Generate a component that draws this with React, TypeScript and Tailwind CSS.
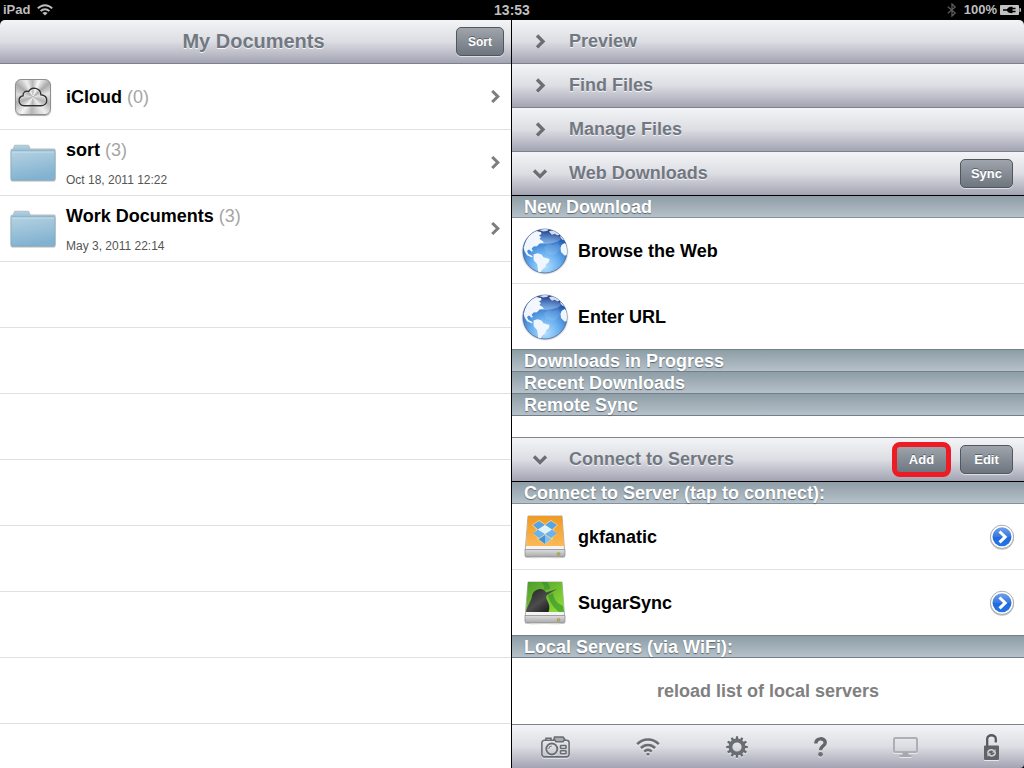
import type { ReactNode } from 'react';

const barGradient = 'bg-linear-to-b from-[#f3f4f7] via-[#dddee3] to-[#a2a4b3]';
const barText = 'text-[#717881] [text-shadow:0_1px_0_#f4f4f8]';

interface FolderItem {
  name: string;
  count: number;
  date?: string;
  icon: ReactNode;
}

function WifiIcon({ className, fill }: { className: string; fill: string }) {
  return (
    <svg className={className} viewBox="0 0 24 18" fill="none" stroke={fill} strokeWidth="2.6">
      <path d="M1.2 6.2C7.4 0 16.6 0 22.8 6.2" />
      <path d="M4.9 10c4-4 10.2-4 14.2 0" />
      <path d="M8.3 13.6c2.2-2 5.2-2 7.4 0" />
      <path d="M12 18l-2-2.1c1.2-1.1 2.8-1.1 4 0z" fill={fill} stroke="none" />
    </svg>
  );
}

function StatusWifi() {
  return (
    <svg className="h-3 w-4" viewBox="0 0 16 12" fill="none" stroke="#bdbdbd" strokeWidth="1.9">
      <path d="M.8 4.4C5 .1 11 .1 15.2 4.4" />
      <path d="M3.6 7.1c2.5-2.4 6.3-2.4 8.800 0" />
      <path d="M8 11.5L5.4 8.9c1.5-1.3 3.7-1.3 5.2 0z" fill="#bdbdbd" stroke="none" />
    </svg>
  );
}

function BluetoothIcon() {
  return (
    <svg className="h-[14px] w-[10px]" viewBox="0 0 10 14" fill="none" stroke="#5b5b5b" strokeWidth="1.3">
      <path d="M.8 3.8l7.4 6.2L5 13V1l3.2 3L.8 10.2" />
    </svg>
  );
}

function BatteryIcon() {
  return (
    <svg className="h-[10px] w-[21px]" viewBox="0 0 21 10">
      <path d="M1 0h17a1 1 0 011 1v8a1 1 0 01-1 1H1a1 1 0 01-1-1V1a1 1 0 011-1z" fill="#c2c2c2" />
      <path d="M19.5 3h.5a1 1 0 011 1v2a1 1 0 01-1 1h-.5z" fill="#c2c2c2" />
      <path d="M3 4.200h4C8 2.300 9.500 1.800 12.500 1.800v1h3v1.400h-3v1.600h3v1.400h-3v1c-3 0-4.500-.5-5.500-2.400H3z" fill="#000" />
    </svg>
  );
}

function ICloudIcon() {
  return (
    <div className="h-9 w-9 rounded-md border border-[#8e8e8e] bg-[conic-gradient(from_20deg,#f8f8f8,#aaa_8%,#e6e6e6_16%,#b5b5b5_26%,#eee_34%,#b5b5b5_46%,#f4f4f4_54%,#b0b0b0_64%,#ddd_72%,#aaa_80%,#eee_88%,#b8b8b8_94%,#f8f8f8)] shadow-[0_1px_1px_#aaa]">
      <svg className="h-full w-full" viewBox="0 0 34 34" fill="none" stroke="#333" strokeWidth="1.4">
        <path d="M8 26.5a5 5 0 01-.9-9.9 3.9 3.9 0 015.5-4.2c2.8-5.6 11.8-4 12.3 3.2 8 .8 7.5 10.9.4 10.9z" stroke="#fff" strokeOpacity=".6" />
        <path d="M8 25.7a5 5 0 01-.9-9.9 3.9 3.9 0 015.5-4.2c2.8-5.6 11.8-4 12.3 3.2 8 .8 7.5 10.9.4 10.9z" />
      </svg>
    </div>
  );
}

function FolderIcon() {
  return (
    <svg className="h-[38px] w-[46px]" viewBox="0 0 46 38">
      <defs>
        <linearGradient id="folderBack" x1="0" y1="0" x2="0" y2="1">
          <stop offset="0" stopColor="#b4d2e2" />
          <stop offset="1" stopColor="#83b1cd" />
        </linearGradient>
        <linearGradient id="folderFront" x1="0" y1="0" x2=".25" y2="1">
          <stop offset="0" stopColor="#b5d2e2" />
          <stop offset="1" stopColor="#82b2d0" />
        </linearGradient>
      </defs>
      <path d="M.5 8V6.500C.5 5 1.500 4.700 3 4.500l.6-2C4 1.200 4.600.8 6 .8h11c1.500 0 2.200.5 2.700 1.800l.8 1.900H44c1 0 1.700.7 1.700 2V35c0 1.700-1 2.600-2 2.600H3c-1.500 0-2.500-1-2.500-2.600z" fill="#8c8c8c" fillOpacity=".6" />
      <path d="M1.5 8V6.500c0-.7.5-1 1.900-1l.7-2.500C4.400 1.800 4.900 1.500 6 1.500h10.700c1.300 0 1.900.3 2.300 1.500l.9 2.500h23.300c1 0 1.600.5 1.600 1.300V10z" fill="url(#folderBack)" />
      <path d="M1 8.500C1 7.500 1.500 7 2.500 7h41c1 0 1.500.5 1.500 1.500v25.700c0 1.300-.8 2-2 2H3c-1.300 0-2-.7-2-2z" fill="url(#folderFront)" stroke="#7aa9c5" strokeWidth=".6" />
      <path d="M2 8h42" stroke="#cfe3ee" strokeWidth=".8" />
    </svg>
  );
}

function GlobeIcon() {
  return (
    <svg className="h-12 w-12" viewBox="0 0 48 48">
      <defs>
        <radialGradient id="ocean" cx=".5" cy=".86" r=".85">
          <stop offset="0" stopColor="#b4e0ff" />
          <stop offset=".4" stopColor="#68aeee" />
          <stop offset=".75" stopColor="#3071c4" />
          <stop offset="1" stopColor="#142b78" />
        </radialGradient>
        <radialGradient id="globeShadow">
          <stop offset=".82" stopColor="#000" stopOpacity=".4" />
          <stop offset="1" stopColor="#000" stopOpacity="0" />
        </radialGradient>
        <linearGradient id="globeGloss" x1="0" y1="0" x2="0" y2="1">
          <stop offset="0" stopColor="#fff" stopOpacity=".05" />
          <stop offset="1" stopColor="#fff" stopOpacity=".35" />
        </linearGradient>
        <clipPath id="globeClip">
          <circle cx="24" cy="24" r="22" />
        </clipPath>
      </defs>
      <ellipse cx="24" cy="25" rx="24" ry="23" fill="url(#globeShadow)" />
      <circle cx="24" cy="24" r="22" fill="url(#ocean)" stroke="#3b5d93" strokeWidth=".7" />
      <g clipPath="url(#globeClip)" fill="#f0f6fe">
        <path d="M3 20C5 11 9 7 15 4l5 1 .5 2-2.500 1.500 2 1.500-1.500 2 3 2 1.500 1.500-4.500 1-2.500 2.800-3.500.2-2 2.500 1.500 1.800-1.200 1-2.800-2.300-2 1.500 1.500 3 3 1.500 1.500 1.500-1.500.3-4.500-2-2.500-4-1-4z" />
        <path d="M12.500 27.500l4-1.200 4 1.200 2 2.700 6 1.800-.5 3-2.800 2.300-1 3-3 2.500-2 3-2-1-1-7.500-3.500-4z" />
        <path d="M40.500 18l3-2 3.500 3v9l-3.500.5-3.500-3.500-.5-4z" />
        <path d="M18 3l6-1.500 4 1-2 1.500-4 .5zM28 4l5-.8 4 2 2 2.500-2.500.5-3-1.500-2.500 1-2-2zM39 8l3 2.500 1.500 3-2.500-1-1.500-2z" opacity=".85" />
        <path d="M23 20l4-3 5 1 5-2 3 5-5 6-4 1-6-2z" opacity=".12" />
      </g>
      <path d="M24 3c9 0 14 4 16 9-4 6-28 7-32 0C10 7 15 3 24 3z" fill="url(#globeGloss)" />
    </svg>
  );
}

function DriveIcon({ kind }: { kind: 'dropbox' | 'sugarsync' }) {
  return (
    <svg className="h-11 w-[42px]" viewBox="0 0 42 44">
      <defs>
        <linearGradient id="orangeTop" x1="0" y1="0" x2="0" y2="1">
          <stop offset="0" stopColor="#ef9a24" />
          <stop offset="1" stopColor="#fbb955" />
        </linearGradient>
        <linearGradient id="greenTop" x1="0" y1="0" x2="1" y2="1">
          <stop offset="0" stopColor="#4b9a2c" />
          <stop offset="1" stopColor="#94e134" />
        </linearGradient>
        <linearGradient id="driveFront" x1="0" y1="0" x2="0" y2="1">
          <stop offset="0" stopColor="#dedede" />
          <stop offset="1" stopColor="#a8a8a8" />
        </linearGradient>
        <linearGradient id="birdBody" x1="0" y1="0" x2="1" y2="1">
          <stop offset="0" stopColor="#222" />
          <stop offset=".5" stopColor="#4c4c4c" />
          <stop offset="1" stopColor="#080808" />
        </linearGradient>
      </defs>
      <path d="M1 42q20 4 40 0v.5q-20 3-40 0z" fill="#000" opacity=".2" />
      <path d="M4 1h34l2.600 34H1.200z" fill="#f4f4f4" stroke="#8f8f8f" strokeWidth=".7" />
      <path d="M4 1h34l2.200 30H2z" fill={kind === 'dropbox' ? 'url(#orangeTop)' : 'url(#greenTop)'} />
      <path d="M1 34.500h40v6q0 1.500-2 1.500H3q-2 0-2-1.500z" fill="url(#driveFront)" stroke="#888" strokeWidth=".7" />
      <circle cx="34.5" cy="39" r="1.4" fill="#c7c51d" stroke="#777" strokeWidth=".5" />
      {kind === 'dropbox' ? (
        <g>
          <path d="M15 5l6 4 6-4 7 5-4.500 4.500L33 19l-4 3v2l-8 5.500-8-5.500v-2l-4-3 3.500-4.500L8 10z" fill="#ffe1a8" opacity=".7" />
          <path d="M15 6l6 4-7 4.500L9 10zM27 6l-6 4 7 4.500 5-4.500z" fill="#51a5e8" />
          <path d="M9 18.500l5-4 7 4.500-6 4zM33 18.500l-5-4-7 4.500 6 4z" fill="#69b4ee" />
          <path d="M21 10l7 4.500-7 4.500-7-4.500z" fill="#e0f2ff" />
          <path d="M13 23l2 .9 6-3.900v9z" fill="#3e91dc" />
          <path d="M29 23l-2 .9-6-3.900v9z" fill="#80c1f3" />
        </g>
      ) : (
        <g>
          <path d="M17 1c3 3 4 5 3 8l6-1c0-3-1-5-3-7zM24 14c2 8 6 13 11 17h5l-1-6c-6-3-9-6-10-13z" fill="#2f8d2d" opacity=".6" />
          <path d="M2 31c1-6 5-10 6-16 1-5 5-7 8.500-7 2.500 0 4.500 1.500 5.500 3.500L33 8l-10 6c-1.500 1.500-1 3.500.5 6 2 3.500 2.500 7 1 11z" fill="url(#birdBody)" />
        </g>
      )}
    </svg>
  );
}

function Chevron({ down = false, className = '' }: { down?: boolean; className?: string }) {
  return (
    <svg className={className} width="16" height="16" viewBox="0 0 16 16" fill="none" strokeWidth="3.4">
      <path d={down ? 'M2 5.500l6 6 6-6' : 'M5 2l6 6-6 6'} stroke="#fff" strokeOpacity=".6" />
      <path d={down ? 'M2 4.500l6 6 6-6' : 'M5 1.500l6 6-6 6'} stroke="#6b6f73" />
    </svg>
  );
}

function RowChevron() {
  return (
    <svg className="h-[13px] w-[9px] shrink-0" viewBox="0 0 9 13" fill="none" stroke="#7d7d7d" strokeWidth="3">
      <path d="M1.2 1l5.600 5.500L1.200 12" />
    </svg>
  );
}

function DetailIcon() {
  return (
    <svg className="h-[26px] w-[26px]" viewBox="0 0 26 26">
      <defs>
        <linearGradient id="detailBlue" x1="0" y1="0" x2="0" y2="1">
          <stop offset="0" stopColor="#71a2e9" />
          <stop offset=".5" stopColor="#3777df" />
          <stop offset=".52" stopColor="#216ade" />
          <stop offset="1" stopColor="#2274e8" />
        </linearGradient>
      </defs>
      <circle cx="13" cy="13.8" r="12" fill="#000" opacity=".25" />
      <circle cx="13" cy="12.8" r="11.6" fill="#fff" stroke="#999" strokeWidth=".8" />
      <circle cx="13" cy="12.8" r="9.5" fill="url(#detailBlue)" />
      <path d="M10.500 7.500l5.700 5.400-5.700 5.400" fill="none" stroke="#fff" strokeWidth="3" />
    </svg>
  );
}

function CameraIcon() {
  return (
    <svg className="h-[22px] w-[29px]" viewBox="0 0 29 22" fill="none" stroke="#686d73" strokeWidth="1.6">
      <path d="M3.500 4.200h9l1-1.500h9l1 1.500h2a2.600 2.600 0 012.600 2.600v11.500a2.600 2.600 0 01-2.600 2.600H3.500A2.600 2.600 0 01.9 18.300V6.800a2.600 2.600 0 012.600-2.600z" />
      <path d="M5 4V2.200h5V4M13.500 1h8.500l1.800 2.200-1.800 2.600h-7l-1.800-2.600z" fill="#aaadb2" />
      <circle cx="10.8" cy="13" r="5.500" strokeWidth="1.900" />
      <path d="M7.800 13a3 3 0 013-3" strokeWidth="1" />
      <rect x="19.5" y="9.5" width="5.5" height="3" rx=".6" />
      <rect x="19.5" y="14.8" width="5.5" height="3" rx=".6" />
    </svg>
  );
}

function GearIcon() {
  const teeth = Array.from({ length: 12 }, (_, i) => i * 30);
  return (
    <svg className="h-[22px] w-[22px]" viewBox="0 0 22 22">
      {teeth.map((angle) => (
        <path key={angle} d="M9.700 3.500l.3-3.300h2l.3 3.300z" fill="#63686e" transform={`rotate(${angle} 11 11)`} />
      ))}
      <circle cx="11" cy="11" r="6.5" fill="none" stroke="#696e74" strokeWidth="3.8" />
    </svg>
  );
}

function QuestionIcon() {
  return (
    <svg className="h-5 w-[13px]" viewBox="0 0 13 20" fill="none">
      <path d="M1.900 6.500C1.500.4 11.200.6 11.200 5.500c0 4-4.700 3.500-4.700 7.800" stroke="#62676d" strokeWidth="3.500" />
      <circle cx="6.5" cy="17.3" r="2.4" fill="#6d7177" />
    </svg>
  );
}

function MonitorIcon() {
  return (
    <svg className="h-5 w-[25px]" viewBox="0 0 25 20">
      <rect x="1" y="1" width="23" height="14" rx="1.5" fill="none" stroke="#adafb5" strokeWidth="2" />
      <path d="M9.500 15.500h6v2.500h3v2h-12v-2h3z" fill="#a6a8b0" />
    </svg>
  );
}

function LockIcon() {
  return (
    <svg className="h-[26px] w-[15px]" viewBox="0 0 15 26" fill="none">
      <path d="M3.200 13V5c0-5 8.600-5 8.600 0v3.500" stroke="#55595f" strokeWidth="2.3" />
      <rect y="11.5" width="15" height="14.5" rx="1" fill="#5f6368" />
      <path d="M3.700 19.500c0-3.500 3.500-4.800 6-2.800M11.300 18c.2 3.500-3.500 5-6 2.900" stroke="#d3d4d9" strokeWidth="1.5" />
      <path d="M11.500 15v3.500H8zM3.500 22.700v-3.500H7z" fill="#d3d4d9" />
    </svg>
  );
}

function BarButton({ children, small = false, marked = false }: { children: ReactNode; small?: boolean; marked?: boolean }) {
  return (
    <button
      type="button"
      className={`h-[29px] rounded-[5px] border bg-linear-to-b from-[#a0a5ad] to-[#6d757e] font-bold text-white [text-shadow:0_-1px_0_#5c626a] ${
        small ? 'w-12 text-[12px]' : 'w-[53px] text-[13px]'
      } ${marked ? 'border-[#777d84] outline-[5px] outline-[#ed1c24] -outline-offset-2' : 'border-[#52575d] shadow-[0_1px_0_#dedfe5]'}`}
    >
      {children}
    </button>
  );
}

function PanelHeader({ title, open = false, children }: { title: string; open?: boolean; children?: ReactNode }) {
  return (
    <div className={`flex h-11 items-center border-b pr-[11px] ${barGradient} ${open ? 'border-black' : 'border-[#7f8088]'}`}>
      <button type="button" aria-expanded={open} className={`flex h-full flex-1 items-center pl-5 text-left text-[18px] font-bold ${barText}`}>
        <Chevron down={open} className="mr-[21px]" />
        {title}
      </button>
      <div className="flex gap-3">{children}</div>
    </div>
  );
}

function SectionTitle({ children, className }: { children: ReactNode; className: string }) {
  return (
    <h2 className={`bg-linear-to-b from-[#8e9da6] to-[#b6c1c9] pt-px pl-3 text-[18px] leading-5 font-bold text-white [text-shadow:0_1px_1px_#5c6871] ${className}`}>
      {children}
    </h2>
  );
}

function ActionRow({ icon, label, last = false, detail = false }: { icon: ReactNode; label: string; last?: boolean; detail?: boolean }) {
  return (
    <li className={`flex items-center ${last ? 'h-[65px]' : 'h-[66px] border-b border-[#e0e0e0]'}`}>
      <button type="button" className="flex h-full flex-1 items-center text-left text-[18px] font-bold">
        <span className="flex w-[66px] justify-center">{icon}</span>
        <span className="pt-0.5">{label}</span>
      </button>
      {detail && (
        <button type="button" aria-label={`${label} details`} className="mr-[9px]">
          <DetailIcon />
        </button>
      )}
    </li>
  );
}

function StatusBar() {
  return (
    <header className="grid h-5 shrink-0 grid-cols-3 items-center bg-black text-[13px] leading-5 font-bold text-[#bebebe]">
      <div className="flex items-center gap-[7px] pl-[3px]">
        iPad
        <StatusWifi />
      </div>
      <div className="text-center text-[14px]">13:53</div>
      <div className="flex items-center justify-end gap-[3px] pr-[3px]">
        <span className="mr-1"><BluetoothIcon /></span>
        100%
        <BatteryIcon />
      </div>
    </header>
  );
}

const folders: FolderItem[] = [
  { name: 'iCloud', count: 0, icon: <ICloudIcon /> },
  { name: 'sort', count: 3, date: 'Oct 18, 2011 12:22', icon: <FolderIcon /> },
  { name: 'Work Documents', count: 3, date: 'May 3, 2011 22:14', icon: <FolderIcon /> }
];

const tools = [
  { label: 'Camera', icon: <CameraIcon /> },
  { label: 'WiFi', icon: <WifiIcon className="h-[18px] w-6" fill="#696e74" /> },
  { label: 'Settings', icon: <GearIcon /> },
  { label: 'Help', icon: <QuestionIcon /> },
  { label: 'Display', icon: <MonitorIcon /> },
  { label: 'Lock', icon: <LockIcon /> }
];

function DocumentsPane() {
  return (
    <section className="flex flex-1 flex-col border-r border-black bg-white">
      <div className="bg-black">
        <div className={`grid h-11 grid-cols-[1fr_auto_1fr] items-center rounded-tl-[5px] border-b border-[#7d8093] pr-[7px] pl-[3px] ${barGradient}`}>
          <h1 className={`col-start-2 pb-0.5 text-[20px] font-bold ${barText}`}>My Documents</h1>
          <div className="flex justify-end">
            <BarButton small>Sort</BarButton>
          </div>
        </div>
      </div>
      <ul>
        {folders.map((folder) => (
          <li key={folder.name} className="border-b border-[#e0e0e0]">
            <button type="button" className="flex h-[65px] w-full items-center pr-[11px] text-left">
              <span className="flex w-[66px] justify-center">{folder.icon}</span>
              <span className={folder.date ? 'flex-1 pt-1' : 'flex-1'}>
                <span className="block text-[18px] leading-[30px] font-bold">
                  {folder.name} <span className="font-normal text-[#a5a5a5]">({folder.count})</span>
                </span>
                {folder.date && <span className="block text-[12px] leading-[30px] text-[#555]">{folder.date}</span>}
              </span>
              <RowChevron />
            </button>
          </li>
        ))}
        {Array.from({ length: 7 }, (_, i) => (
          <li key={i} className="h-[66px] border-b border-[#e0e0e0]" />
        ))}
      </ul>
    </section>
  );
}

function ToolsPane() {
  return (
    <section className="flex flex-1 flex-col bg-white">
      <div className="bg-black">
        <div className="overflow-hidden rounded-tr-[5px]">
          <PanelHeader title="Preview" />
        </div>
      </div>
      <PanelHeader title="Find Files" />
      <PanelHeader title="Manage Files" />
      <PanelHeader title="Web Downloads" open>
        <BarButton>Sync</BarButton>
      </PanelHeader>

      <SectionTitle className="border-b border-[#84929b]">New Download</SectionTitle>
      <ul>
        <ActionRow icon={<GlobeIcon />} label="Browse the Web" />
        <ActionRow icon={<GlobeIcon />} label="Enter URL" last />
      </ul>
      <SectionTitle className="border-t border-[#71808a]">Downloads in Progress</SectionTitle>
      <SectionTitle className="border-t border-[#71808a]">Recent Downloads</SectionTitle>
      <SectionTitle className="border-y border-[#71808a]">Remote Sync</SectionTitle>

      <div className="mt-[21px] border-t border-[#85868c]">
        <PanelHeader title="Connect to Servers" open>
          <BarButton marked>Add</BarButton>
          <BarButton>Edit</BarButton>
        </PanelHeader>
      </div>
      <SectionTitle className="border-b border-[#84929b]">Connect to Server (tap to connect):</SectionTitle>
      <ul>
        <ActionRow icon={<DriveIcon kind="dropbox" />} label="gkfanatic" detail />
        <ActionRow icon={<DriveIcon kind="sugarsync" />} label="SugarSync" detail last />
      </ul>
      <SectionTitle className="border-y border-[#71808a]">Local Servers (via WiFi):</SectionTitle>
      <button type="button" className="h-[66px] text-[18px] font-bold text-[#808080]">
        reload list of local servers
      </button>

      <footer className="mt-auto bg-black">
        <div className={`flex h-11 items-center justify-between rounded-br-[4px] border-t border-[#7f8088] pr-[25px] pl-[29px] ${barGradient}`}>
          {tools.map((tool) => (
            <button key={tool.label} type="button" aria-label={tool.label} className="drop-shadow-[0_1px_0_#e8e8ec]">
              {tool.icon}
            </button>
          ))}
        </div>
      </footer>
    </section>
  );
}

export default function App() {
  return (
    <div className="flex min-h-screen flex-col bg-black font-['Liberation_Sans',Arial,sans-serif] text-black">
      <StatusBar />
      <main className="grid flex-1 grid-cols-2">
        <DocumentsPane />
        <ToolsPane />
      </main>
    </div>
  );
}
